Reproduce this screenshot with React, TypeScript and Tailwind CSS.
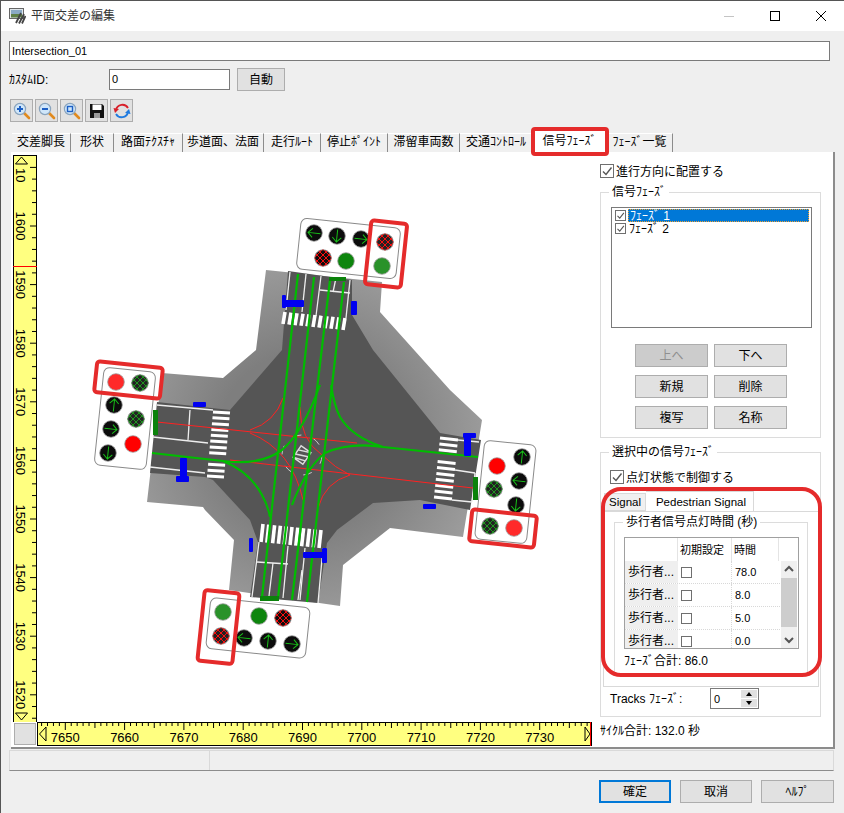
import type { ReactNode } from "react";

const FONT = "[font-family:'Liberation_Sans','Noto_Sans_CJK_JP',sans-serif]";
const RED = "#e52b2b";

const tabs = [
  { label: "交差脚長", w: "w-[59px]" },
  { label: "形状", w: "w-[43px]" },
  { label: "路面ﾃｸｽﾁｬ", w: "w-[69px]" },
  { label: "歩道面、法面", w: "w-[81px]" },
  { label: "走行ﾙｰﾄ", w: "w-[57px]" },
  { label: "停止ﾎﾟｲﾝﾄ", w: "w-[67px]" },
  { label: "滞留車両数", w: "w-[72px]" },
  { label: "交通ｺﾝﾄﾛｰﾙ", w: "w-[73px]" },
  { label: "信号ﾌｪｰｽﾞ", w: "w-[74px]", active: true },
  { label: "ﾌｪｰｽﾞ一覧", w: "w-[66px]" },
];

const pedRows = ["78.0", "8.0", "5.0", "0.0"];

function Check({ checked = false, small = false }: { checked?: boolean; small?: boolean }) {
  return (
    <span className={`flex shrink-0 items-center justify-center border border-[#6f6f6f] bg-white ${small ? "h-[11px] w-[11px]" : "h-[14px] w-[14px]"}`}>
      {checked && (
        <svg viewBox="0 0 12 12" className="h-full w-full">
          <path d="M2 6.5 L5 9.5 L10.5 2.5" fill="none" stroke="#555" strokeWidth="1.4" />
        </svg>
      )}
    </span>
  );
}

function Btn({ children, className = "", look = "plain" }: { children: ReactNode; className?: string; look?: "plain" | "off" | "main" }) {
  const tone =
    look === "off"
      ? "border border-[#adadad] bg-[#cccccc] text-[#8f8f8f]"
      : look === "main"
        ? "border-2 border-[#0078d7] bg-[#e1e1e1] text-black"
        : "border border-[#adadad] bg-[#e1e1e1] text-black";
  return <div className={`flex h-[23px] items-center justify-center text-[12px] ${tone} ${className}`}>{children}</div>;
}

function Lens({ children }: { children?: ReactNode }) {
  return (
    <svg viewBox="0 0 18 18" className="h-[18px] w-[18px]">
      <path d="M10.5 10.5 L16 16" stroke="#e08a1e" strokeWidth="2.6" strokeLinecap="round" />
      <circle cx="7" cy="7" r="5.6" fill="#cfe6fa" stroke="#8aa4bd" strokeWidth="1.2" />
      {children}
    </svg>
  );
}

function TitleIcon() {
  return (
    <svg viewBox="0 0 17 16" className="h-4 w-[17px]">
      <rect x="0.5" y="0.5" width="14" height="10" fill="#dfe6ea" stroke="#666" />
      <rect x="2" y="2" width="11" height="4" fill="#8aa9c4" />
      <rect x="2" y="6" width="11" height="3.5" fill="#5f7f45" />
      <path d="M7 15 L12 5 M10 15.5 L15 6 M13 15.5 L16.5 8" stroke="#444" strokeWidth="1.8" fill="none" />
    </svg>
  );
}

function Lamp({ x, y, kind }: { x: number; y: number; kind: string }) {
  const r = 8.3;
  if (kind === "red" || kind === "lred") return <circle cx={x} cy={y} r={r} fill={kind === "red" ? "#ff0000" : "#ff2a2a"} stroke="#9a9a9a" strokeWidth="0.8" />;
  if (kind === "green" || kind === "lgreen") return <circle cx={x} cy={y} r={r} fill={kind === "green" ? "#0d850d" : "#2a922a"} stroke="#9a9a9a" strokeWidth="0.8" />;
  const dark = kind === "rgrid2" || kind === "ggrid" ? "#222" : "#0c0c0c";
  let mark: ReactNode = null;
  if (kind === "rgrid" || kind === "rgrid2" || kind === "ggrid") {
    const color = kind === "ggrid" ? "#1f9a1f" : "#ff1010";
    const lines = [];
    for (const d of [-6.3, -2.1, 2.1, 6.3]) {
      const h = Math.sqrt(r * r - d * d);
      const s = Math.SQRT1_2;
      lines.push(<path key={`a${d}`} d={`M${x + d * s - h * s} ${y + d * s + h * s} L${x + d * s + h * s} ${y + d * s - h * s}`} />);
      lines.push(<path key={`b${d}`} d={`M${x + d * s - h * s} ${y - d * s - h * s} L${x + d * s + h * s} ${y - d * s + h * s}`} />);
    }
    mark = <g stroke={color} strokeWidth="1">{lines}</g>;
  } else {
    const rot = { up: 6, right: 96, down: 186, left: 276 }[kind] ?? 0;
    mark = (
      <path transform={`translate(${x} ${y}) rotate(${rot})`} d="M0 6.5 L0 -6 M-4.5 -1.5 L0 -6 L4.5 -1.5" fill="none" stroke="#18c018" strokeWidth="1" />
    );
  }
  return (
    <g>
      <circle cx={x} cy={y} r={r} fill={dark} stroke="#9a9a9a" strokeWidth="0.8" />
      {mark}
    </g>
  );
}

function Zebra({ a, b, n, w, skip = [] }: { a: number[]; b: number[]; n: number; w: number; skip?: number[] }) {
  const items = [];
  for (let i = 0; i < n; i++) {
    if (skip.includes(i)) continue;
    const t = i / (n - 1);
    const p = [a[0] + (b[0] - a[0]) * t, a[1] + (b[1] - a[1]) * t];
    items.push(<path key={i} d={`M${p[0]} ${p[1]} l${a[2]} ${a[3]}`} />);
  }
  return <g stroke="#fff" strokeWidth={w}>{items}</g>;
}

const panels = [
  { cx: 348.5, cy: 248.5, w: 100, h: 51 },
  { cx: 125, cy: 418.5, w: 52, h: 98 },
  { cx: 258, cy: 628, w: 100, h: 51 },
  { cx: 505.5, cy: 492, w: 52, h: 99 },
];

const lamps = [
  [314, 233, "left"], [337, 236, "down"], [361, 239, "right"], [385, 242, "rgrid2"], [323, 258, "rgrid"], [346, 261, "green"], [382, 266, "lgreen"],
  [116, 382, "lred"], [140, 383, "ggrid"], [114, 405, "up"], [136, 419, "ggrid"], [111, 429, "right"], [133, 444, "red"], [108, 453, "down"],
  [223, 612, "lgreen"], [259, 616, "green"], [283, 618, "rgrid"], [221, 636, "rgrid2"], [244, 638, "left"], [268, 641, "up"], [292, 644, "right"],
  [522, 457, "up"], [497, 466, "red"], [519, 481, "left"], [494, 489, "ggrid"], [516, 505, "down"], [490, 526, "ggrid"], [514, 528, "lred"],
] as [number, number, string][];

const highlights = [
  { cx: 386, cy: 254, w: 36, h: 64 },
  { cx: 128.5, cy: 380, w: 66, h: 31 },
  { cx: 218.5, cy: 627, w: 35, h: 71 },
  { cx: 503, cy: 528.5, w: 65, h: 32 },
];

const whiteLines = [
  "M290 272 L286 310", "M306 274 L302 312", "M321 276 L316 316", "M350 280 L346 318", "M320 290 L350 293", "M336 278 L333 292",
  "M157 405 L213 410", "M153 437 L208 443", "M150 467 L205 473", "M190 410 L188 440",
  "M458 440 L479 442", "M455 470 L475 473", "M452 500 L472 502", "M475 473 L472 502",
  "M259 542 L252 597", "M323 548 L318 603", "M257 562 L288 564", "M273 563 L269 596", "M288 546 L283 598", "M305 548 L300 600", "M302 570 L298 600",
];

const greenPaths = [
  "M298 274 L262 597", "M314 277 L278 598", "M330 280 L292 600", "M344 282 L307 602",
  "M152 453 L223 461 Q260 466 282 450 Q303 432 320 385",
  "M223 461 Q250 472 262 495 Q268 506 270 517",
  "M478 457 L383 447 Q350 442 325 453 Q306 468 292 505",
  "M383 447 Q352 437 340 417 Q334 405 331 385",
];

const redPaths = [
  "M157 422 L357 443", "M230 460 L473 488",
  "M250 430 Q275 422 283 398", "M250 433 Q292 450 303 500",
  "M300 407 Q300 440 322 455 Q335 468 350 475", "M350 475 Q325 482 318 508",
];

const blues = [
  [282, 295, 4, 13], [283, 300, 21, 7], [351, 301, 6, 14], [193, 402, 13, 5], [180, 458, 7, 22], [176, 476, 13, 6],
  [463, 433, 13, 5], [464, 437, 7, 19], [423, 504, 13, 5], [249, 538, 4, 14], [303, 552, 24, 6], [322, 548, 5, 15],
];
const stops = [
  [329, 277, 17, 4], [153, 410, 5, 25], [473, 477, 5, 23], [260, 596, 19, 5],
];

function Scene() {
  return (
    <svg viewBox="37 155 555 567" className="block h-[567px] w-[555px]">
      <defs>
        <radialGradient id="walk" gradientUnits="userSpaceOnUse" cx="305" cy="440" r="195">
          <stop offset="0.45" stopColor="#7e7e7e" />
          <stop offset="1" stopColor="#a0a0a0" />
        </radialGradient>
      </defs>
      <path
        d="M266 270 L382 282 L380 312 L450 390 L482 420 L463 537 L390 528 L343 565 L340 606 L229 590 L234 540 L205 510 L203 507 L147 502 L162 373 L223 378 L256 350 Z"
        fill="url(#walk)"
      />
      <path
        d="M288 271 L352 280 L352 315 L373 350 L440 433 L481 440 L470 510 L420 500 L373 503 L337 530 L327 543 L318 603 L250 597 L258 542 L250 520 L213 480 L205 477 L150 473 L157 402 L230 410 L282 350 Z"
        fill="#555"
      />
      <g stroke="#eee" strokeWidth="1.3" fill="none">
        {whiteLines.map((d) => <path key={d} d={d} />)}
      </g>
      <Zebra a={[285, 312, -2, 12]} b={[345, 318, -2, 12]} n={11} w={3.6} />
      <Zebra a={[263, 524, -2, 18]} b={[321, 530, -2, 18]} n={11} w={3.6} />
      <Zebra a={[213, 412, 17, 1]} b={[207, 476, 17, 1]} n={12} w={3} skip={[8]} />
      <Zebra a={[440, 438, 18, 2]} b={[434, 497, 18, 2]} n={11} w={3} skip={[3]} />
      <circle cx="302" cy="455" r="20" fill="none" stroke="#c8c8c8" strokeWidth="1" strokeDasharray="9 12" />
      <g transform="rotate(35 302 455)" stroke="#ddd" fill="none" strokeWidth="1.4">
        <rect x="296" y="448" width="12" height="14" />
        <path d="M296 453 L308 448 M296 458 L308 453 M296 462 L308 458" />
      </g>
      <g stroke="#f22" strokeWidth="1" fill="none">
        {redPaths.map((d) => <path key={d} d={d} />)}
      </g>
      <g stroke="#00bd00" strokeWidth="2.2" fill="none">
        {greenPaths.map((d) => <path key={d} d={d} />)}
      </g>
      {blues.map(([x, y, w, h]) => <rect key={`${x}-${y}`} x={x} y={y} width={w} height={h} rx="1" fill="#0000f0" />)}
      {stops.map(([x, y, w, h]) => <rect key={`${x}-${y}`} x={x} y={y} width={w} height={h} fill="#0b820b" />)}
      {panels.map((p) => (
        <rect
          key={p.cx}
          x={p.cx - p.w / 2}
          y={p.cy - p.h / 2}
          width={p.w}
          height={p.h}
          rx="6"
          fill="#fff"
          stroke="#8a8a8a"
          transform={`rotate(6 ${p.cx} ${p.cy})`}
        />
      ))}
      {lamps.map(([x, y, kind]) => <Lamp key={`${x}-${y}`} x={x} y={y} kind={kind} />)}
      {highlights.map((h) => (
        <rect
          key={h.cx}
          x={h.cx - h.w / 2}
          y={h.cy - h.h / 2}
          width={h.w}
          height={h.h}
          rx="3"
          fill="none"
          stroke={RED}
          strokeWidth="4"
          transform={`rotate(6 ${h.cx} ${h.cy})`}
        />
      ))}
    </svg>
  );
}

function VRuler() {
  const ticks = [];
  for (let i = -5; i <= 43; i++) {
    const y = 226 + i * 11.72;
    if (y < 158 || y > 720) continue;
    ticks.push(<path key={i} d={`M${i % 5 === 0 ? 30 : 32} ${y} H36`} stroke="#000" />);
  }
  const labels = ["1600", "1590", "1580", "1570", "1560", "1550", "1540", "1530", "1520"];
  return (
    <svg viewBox="13 155 24 567" className="block h-[567px] w-6 shrink-0">
      <rect x="13.5" y="155.5" width="23" height="567" fill="#ffff80" stroke="#000" />
      {ticks}
      <text transform="translate(16,168) rotate(90)" fontSize="13" fill="#000" fontFamily="Liberation Sans">10</text>
      {labels.map((l, i) => (
        <text key={l} transform={`translate(16,${226 + i * 58.6}) rotate(90)`} textAnchor="middle" fontSize="13" fill="#000" fontFamily="Liberation Sans">{l}</text>
      ))}
      <path d="M15.5 164 L21.5 157 L27.5 164 Z M15.5 713 L21.5 720 L27.5 713 Z" fill="#ffff80" stroke="#000" />
      <path d="M13 266.5 H37" stroke="#f00" />
    </svg>
  );
}

function HRuler() {
  const ticks = [];
  for (let i = -4; i <= 90; i++) {
    const x = 65.3 + i * 5.93;
    if (x < 38 || x > 589) continue;
    ticks.push(<path key={i} d={`M${x} 723 V${i % 10 === 0 ? 730 : i % 5 === 0 ? 728 : 726}`} stroke="#000" />);
  }
  const labels = ["7650", "7660", "7670", "7680", "7690", "7700", "7710", "7720", "7730"];
  return (
    <svg viewBox="37 722 556 24" className="block h-6 w-[556px] shrink-0">
      <rect x="37.5" y="722.5" width="554" height="23" fill="#ffff80" stroke="#000" />
      {ticks}
      {labels.map((l, i) => (
        <text key={l} x={65.3 + i * 59.3} y="742" textAnchor="middle" fontSize="13" fill="#000" fontFamily="Liberation Sans">{l}</text>
      ))}
      <path d="M46 727 L39.5 734 L46 741 Z M585 727 L590 734 L585 741 Z" fill="#ffff80" stroke="#000" />
      <path d="M590.5 722 V746" stroke="#f00" />
    </svg>
  );
}

export default function App() {
  return (
    <div className={`relative flex h-[813px] w-[844px] flex-col overflow-hidden border-t border-l border-[#555] bg-[#efefef] text-[12px] leading-4 text-black ${FONT}`}>
      <div className="flex h-[30px] shrink-0 items-center bg-white pl-2">
        <TitleIcon />
        <span className="ml-[5px] text-[#333]">平面交差の編集</span>
        <div className="ml-auto flex items-center">
          <span className="mr-[36px] h-px w-[10px] bg-[#c4c4c4]" />
          <span className="mr-[36px] h-[10px] w-[10px] border border-black" />
          <svg viewBox="0 0 10 10" className="mr-[18px] h-[10px] w-[10px]">
            <path d="M0 0 L10 10 M10 0 L0 10" stroke="#000" strokeWidth="1" />
          </svg>
        </div>
      </div>

      <div className="flex flex-col pl-2">
        <div className="mt-[10px] flex h-5 w-[821px] items-center border border-[#7a7a7a] bg-white px-[2px] text-[11px]">Intersection_01</div>

        <div className="mt-[7px] flex h-[23px] items-center">
          <span className="w-[100px]">ｶｽﾀﾑID:</span>
          <div className="h-[21px] w-[121px] border border-[#7a7a7a] bg-white px-[2px] pt-px text-[11px]">0</div>
          <Btn className="ml-[7px] w-[48px]">自動</Btn>
        </div>

        <div className="mt-2 flex gap-[2px] pl-px">
          <Btn className="w-[23px]">
            <Lens><path d="M4 7 H10 M7 4 V10" stroke="#1d5fc4" strokeWidth="2" /></Lens>
          </Btn>
          <Btn className="w-[23px]">
            <Lens><path d="M4 7 H10" stroke="#1d5fc4" strokeWidth="2" /></Lens>
          </Btn>
          <Btn className="w-[23px]">
            <Lens><rect x="4.5" y="4.5" width="5" height="5" fill="none" stroke="#1d5fc4" strokeWidth="1.4" /></Lens>
          </Btn>
          <Btn className="w-[23px]">
            <svg viewBox="0 0 16 16" className="h-4 w-4">
              <path d="M1 1 H13 L15 3 V15 H1 Z" fill="#111" />
              <rect x="3.5" y="1.5" width="9" height="5.5" fill="#fff" />
              <rect x="5" y="10" width="6" height="5" fill="#999" />
            </svg>
          </Btn>
          <Btn className="w-[23px]">
            <svg viewBox="0 0 18 18" className="h-[18px] w-[18px]">
              <path d="M3 8 A6.5 6.5 0 0 1 15 6" fill="none" stroke="#d8202a" strokeWidth="1.8" />
              <path d="M15 10 A6.5 6.5 0 0 1 3 12" fill="none" stroke="#1f7be0" strokeWidth="1.8" />
              <path d="M0.5 6 L6 7 L2 11 Z" fill="#d8202a" />
              <path d="M17.5 12 L12 11 L16 7 Z" fill="#1f7be0" />
            </svg>
          </Btn>
        </div>

        <div className="mt-[9px] flex h-[21px] items-end pl-[3px]">
          {tabs.map((t) => (
            <div
              key={t.label}
              className={`flex items-center justify-center whitespace-nowrap border-r border-[#8c8c8c] pb-[2px] ${t.w} ${t.active ? "h-[21px] bg-white" : "h-[19px] border-t border-t-white bg-[#f0f0f0]"}`}
            >
              {t.label}
            </div>
          ))}
        </div>

        <div className="ml-[2px] flex h-[597px] w-[824px] border-r-2 border-b-2 border-[#8c8c8c] bg-white">
          <div className="flex w-[581px] shrink-0 flex-col pl-[2px] pt-[3px]">
            <div className="flex">
              <VRuler />
              <Scene />
            </div>
            <div className="flex">
              <div className="h-6 w-6 p-px">
                <div className="h-[22px] w-[22px] border border-[#adadad] bg-[#e1e1e1]" />
              </div>
              <HRuler />
            </div>
          </div>

          <div className="flex w-[231px] shrink-0 flex-col pl-2">
            <div className="mt-3 flex h-[14px] items-center gap-[2px]">
              <Check checked />
              <span className="pt-px">進行方向に配置する</span>
            </div>

            <fieldset className="mt-[6px] h-[254px] w-[221px] border border-[#dcdcdc]">
              <legend className="ml-2 px-[3px]">信号ﾌｪｰｽﾞ</legend>
              <div className="ml-[10px] mt-[7px] h-[121px] w-[201px] border border-[#7a7a7a] bg-white px-[2px] pt-px">
                <div className="flex h-[13px] items-center gap-[2px] pl-px">
                  <Check checked small />
                  <span className="h-[13px] flex-1 border border-dotted border-[#f0a030] bg-[#0078d7] pl-px text-[12px] leading-[12px] text-white">ﾌｪｰｽﾞ 1</span>
                </div>
                <div className="flex h-[13px] items-center gap-[2px] pl-px">
                  <Check checked small />
                  <span className="pl-px leading-[12px]">ﾌｪｰｽﾞ 2</span>
                </div>
              </div>
              <div className="ml-[34px] mt-[16px] grid w-[152px] grid-cols-2 gap-x-[6px] gap-y-2">
                <Btn look="off">上へ</Btn>
                <Btn>下へ</Btn>
                <Btn>新規</Btn>
                <Btn>削除</Btn>
                <Btn>複写</Btn>
                <Btn>名称</Btn>
              </div>
            </fieldset>

            <fieldset className="mt-[6px] h-[273px] w-[221px] border border-[#dcdcdc]">
              <legend className="ml-2 px-[3px]">選択中の信号ﾌｪｰｽﾞ</legend>
              <div className="ml-[9px] mt-[10px] flex h-[14px] items-center gap-[2px]">
                <Check checked />
                <span className="pt-px">点灯状態で制御する</span>
              </div>

              <div className="mt-[7px] flex h-5 items-end pl-[3px] text-[11.5px]">
                <div className="flex h-[18px] w-[42px] items-center justify-center border border-[#d9d9d9] bg-[#f0f0f0]">Signal</div>
                <div className="flex h-5 w-[108px] items-center justify-center border-t border-r border-[#d9d9d9] bg-white pl-[3px]">Pedestrian Signal</div>
              </div>
              <div className="ml-[2px] h-[176px] w-[216px] border border-[#d9d9d9] bg-white pt-[2px]">
                <fieldset className="ml-[10px] h-[161px] w-[194px] border border-[#dcdcdc]">
                  <legend className="ml-[8px] px-[3px]">歩行者信号点灯時間 (秒)</legend>
                  <div className="ml-[9px] mt-[7px] flex h-[112px] w-[175px] overflow-hidden border border-[#a0a0a0] bg-white">
                    <div className="w-[155px] shrink-0">
                      <div className="flex h-[23px]">
                        <div className="w-[53px] border-r border-[#e4e4e4]" />
                        <div className="flex w-[54px] items-center border-r border-[#e4e4e4] pl-[2px] text-[11px]">初期設定</div>
                        <div className="flex w-[47px] items-center border-r border-[#e4e4e4] pl-[2px] text-[11px]">時間</div>
                      </div>
                      {pedRows.map((v) => (
                        <div key={v} className="flex h-[23px] border-b border-dotted border-[#d8d8d8]">
                          <div className="flex w-[53px] items-center bg-[#efefef] pl-[3px]">歩行者...</div>
                          <div className="flex w-[54px] items-center border-r border-dotted border-[#d8d8d8] pl-[3px]">
                            <Check small />
                          </div>
                          <div className="flex w-[47px] items-center pl-[3px] text-[11px]">{v}</div>
                        </div>
                      ))}
                    </div>
                    <div className="mt-[23px] ml-px flex w-4 flex-col bg-[#f0f0f0]">
                      <svg viewBox="0 0 16 17" className="h-[17px] w-4">
                        <path d="M4 10 L8 6 L12 10" fill="none" stroke="#555" strokeWidth="2" />
                      </svg>
                      <div className="h-[49px] bg-[#cdcdcd]" />
                      <div className="flex-1" />
                      <svg viewBox="0 0 16 17" className="h-[17px] w-4">
                        <path d="M4 7 L8 11 L12 7" fill="none" stroke="#555" strokeWidth="2" />
                      </svg>
                    </div>
                  </div>
                  <div className="ml-[9px] mt-1">ﾌｪｰｽﾞ合計: 86.0</div>
                </fieldset>
              </div>

              <div className="ml-[9px] mt-px flex h-[21px] items-center">
                <span className="w-[100px]">Tracks ﾌｪｰｽﾞ:</span>
                <div className="flex h-[21px] w-[49px] items-center justify-between border border-[#7a7a7a] bg-white pl-[3px] pr-px">
                  <span className="text-[11px]">0</span>
                  <div className="flex w-4 flex-col gap-px">
                    <div className="flex h-2 items-center justify-center bg-[#e1e1e1]">
                      <span className="border-x-[3px] border-b-[4px] border-x-transparent border-b-black" />
                    </div>
                    <div className="flex h-2 items-center justify-center bg-[#e1e1e1]">
                      <span className="border-x-[3px] border-t-[4px] border-x-transparent border-t-black" />
                    </div>
                  </div>
                </div>
              </div>
            </fieldset>

            <div className="mt-[6px]">ｻｲｸﾙ合計: 132.0 秒</div>
          </div>
        </div>

        <div className="mt-px flex h-[21px] w-[825px] border border-[#d9d9d9] border-b-[#8c8c8c]">
          <div className="w-[200px] border-r border-[#d9d9d9]" />
        </div>

        <div className="mt-[9px] flex w-[825px] justify-end gap-[9px]">
          <Btn look="main" className="w-[72px]">確定</Btn>
          <Btn className="w-[72px]">取消</Btn>
          <Btn className="w-[73px]">ﾍﾙﾌﾟ</Btn>
        </div>
      </div>

      <div className="absolute left-[530px] top-[126px] h-[29px] w-[78px] rounded-[4px] border-4 border-[#e52b2b]" />
      <div className="absolute left-[600px] top-[486px] h-[190px] w-[221px] rounded-[20px] border-4 border-[#e52b2b]" />
    </div>
  );
}
